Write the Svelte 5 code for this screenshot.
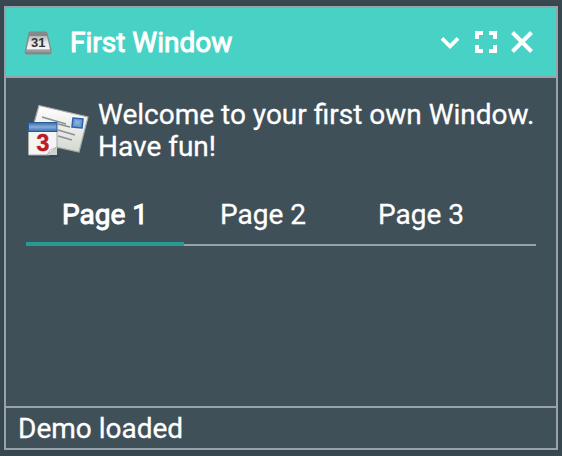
<script>
  let active = $state(0);
  const pages = ['Page 1', 'Page 2', 'Page 3'];
</script>

<div class="desktop">
  <section class="window">
    <header>
      <svg class="app-icon" width="28" height="26" viewBox="0 0 28 26" aria-hidden="true">
        <defs>
          <linearGradient id="paper" x2="0" y2="1"><stop stop-color="#b4b8b8" /><stop offset=".5" stop-color="#e7e9e9" /><stop offset="1" stop-color="#f4f5f5" /></linearGradient>
        </defs>
        <path d="M4.5 3Q4.5 1.5 6 1.5H22Q23.5 1.5 23.5 3L27 18Q28 20 27.5 23Q27 24.5 25 24.5H3Q1 24.5 .7 23Q.5 20 1.5 18Z" fill="#858989" />
        <path d="M5.5 6H23L26 19.5H2.5Z" fill="url(#paper)" />
        <path d="M1.5 21H26.5" stroke="#989d9c" stroke-width="2" />
        <text x="7" y="17" textLength="14.5" lengthAdjust="spacingAndGlyphs">31</text>
      </svg>
      <h1>First Window</h1>
      <div class="controls">
        <svg class="collapse" width="20" height="24" viewBox="0 0 20 24"><path d="m2 8.3 8 8 8-8" fill="none" stroke="white" stroke-width="3.8" /></svg>
        <svg width="22" height="22" viewBox="0 0 22 22"><path d="M2 8V2h6M14 2h6v6M20 14v6h-6M8 20H2v-6" fill="none" stroke="white" stroke-width="4" /></svg>
        <svg width="22" height="22" viewBox="0 0 22 22"><path d="m1.5 1.5 19 19m0-19-19 19" fill="none" stroke="white" stroke-width="4" /></svg>
      </div>
    </header>
    <main>
      <div class="welcome">
        <svg width="64" height="56" viewBox="0 0 64 56" aria-hidden="true">
          <defs>
            <linearGradient id="letter" x2="0" y2="1"><stop stop-color="#fff" /><stop offset="1" stop-color="#d4d8d0" /></linearGradient>
            <linearGradient id="bar" x2="0" y2="1"><stop stop-color="#356cad" /><stop offset=".5" stop-color="#86add9" /><stop offset="1" stop-color="#356cad" /></linearGradient>
          </defs>
          <ellipse cx="17" cy="52" rx="17" ry="2" fill="#303c43" opacity=".4" />
          <path d="M13 1.5 62 13 53 48 3 37Z" fill="url(#letter)" stroke="#a9adaa" stroke-width="1.2" />
          <path d="m16 13 24 7M32 20l12 3M32 26l17 5M32 32l14 4" stroke="#8a9191" stroke-width="1.5" />
          <path d="m47 14 10 1-1 9-10-1Z" fill="#729bd0" stroke="#2d65ad" stroke-width="1.6" />
          <path d="m49 16 5 1-1 4-4-1Z" fill="#82afe0" />
          <path d="M2.5 27H31V45L23 51H2.5Z" fill="#f5f6f4" stroke="#a7aba8" />
          <path d="M31 43V51H21Z" fill="#cfd3cf" /><path d="m21 51 3-5 7-3Z" fill="#fafafa" stroke="#a7aba8" stroke-width=".8" />
          <rect x="2.5" y="18.5" width="28.5" height="9" fill="url(#bar)" stroke="#285b98" />
          <text x="10.5" y="47" class="day">3</text>
        </svg>
        <p>Welcome to your first own Window.<br />Have fun!</p>
      </div>
      <div class="tabs" role="tablist">
        {#each pages as page, i}
          <button role="tab" aria-selected={active === i} class:active={active === i} onclick={() => (active = i)}>{page}</button>
        {/each}
      </div>
    </main>
    <footer>Demo loaded</footer>
  </section>
</div>

<style>
  :global(body) { margin: 0; background: #394952; }
  .desktop { box-sizing: border-box; width: 562px; height: 456px; padding: 6px 4px; background: #394952; font: 28px/32px Roboto, sans-serif; color: white; -webkit-text-stroke: .3px white; }
  .window { box-sizing: border-box; width: 554px; height: 444px; border: 2px solid #9aa2a9; background: #3f5059; box-shadow: 0 0 6px #33424a; display: flex; flex-direction: column; }
  header { box-sizing: border-box; height: 70px; flex: none; display: flex; align-items: center; padding: 0 23px 0 18px; background: #48d1c5; border-bottom: 2px solid #9aa2a9; }
  h1 { margin: 2px 0 0 18px; font: inherit; -webkit-text-stroke: 1px white; }
  svg { display: block; flex: none; -webkit-text-stroke: 0; }
  .app-icon { margin-top: 2px; }
  .app-icon text { font: bold 12px "Liberation Sans", sans-serif; fill: #333; }
  .controls { margin-left: auto; display: flex; align-items: center; gap: 14px; }
  .collapse { margin-right: 1px; }
  main { flex: 1; padding: 20px 20px 0; }
  .welcome { display: flex; height: 84px; }
  .welcome svg { margin-top: 6px; }
  .day { font: bold 23px "Liberation Sans", sans-serif; fill: #bd1925; stroke: #bd1925; stroke-width: .5px; }
  p { margin: 1px 0 0 8px; white-space: nowrap; }
  .tabs { height: 64px; box-sizing: border-box; display: flex; box-shadow: inset 0 -2px #9aa2a9; }
  button { box-sizing: border-box; width: 158px; height: 64px; padding: 2px 0 0; border: 0; background: transparent; color: inherit; font: inherit; }
  button.active { box-shadow: inset 0 -4px #259d91; -webkit-text-stroke: 1px white; }
  footer { box-sizing: border-box; height: 42px; flex: none; padding: 5px 12px 3px; border-top: 2px solid #9aa2a9; }
</style>
